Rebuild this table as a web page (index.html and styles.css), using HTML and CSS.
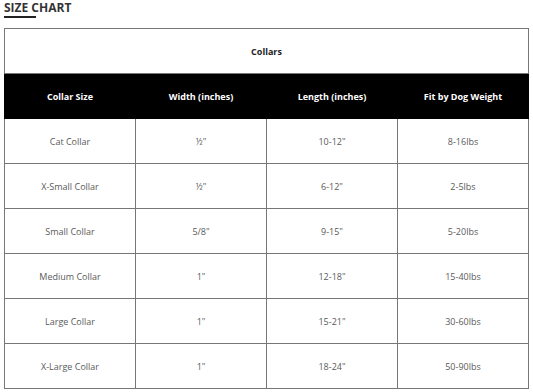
FILE: index.html
```html
<!DOCTYPE html>
<html>
<head>
<meta charset="utf-8">
<link rel="stylesheet" href="styles.css">
</head>
<body>
<div class="page">
  <h2 class="title">SIZE CHART</h2>
  <table class="chart">
    <tr class="caption-row"><td colspan="4">Collars</td></tr>
    <tr class="head-row">
      <th>Collar Size</th><th>Width (inches)</th><th>Length (inches)</th><th>Fit by Dog Weight</th>
    </tr>
    <tr><td>Cat Collar</td><td>½"</td><td>10-12"</td><td>8-16lbs</td></tr>
    <tr><td>X-Small Collar</td><td>½"</td><td>6-12"</td><td>2-5lbs</td></tr>
    <tr><td>Small Collar</td><td>5/8"</td><td>9-15"</td><td>5-20lbs</td></tr>
    <tr><td>Medium Collar</td><td>1"</td><td>12-18"</td><td>15-40lbs</td></tr>
    <tr><td>Large Collar</td><td>1"</td><td>15-21"</td><td>30-60lbs</td></tr>
    <tr><td>X-Large Collar</td><td>1"</td><td>18-24"</td><td>50-90lbs</td></tr>
  </table>
</div>
</body>
</html>
```
FILE: styles.css
```css
html, body {
  margin: 0;
  padding: 0;
  background: #fff;
}
body {
  font-family: "Open Sans", "Liberation Sans", sans-serif;
}
.page {
  padding: 1px 4px 0 4px;
}
.title {
  margin: 0;
  font-size: 12px;
  font-weight: 700;
  color: #333;
  line-height: 14px;
  padding: 0;
  display: block;
}
.title::after {
  content: "";
  display: block;
  width: 32px;
  height: 2px;
  background: #222;
  margin-top: 1px;
}
.chart {
  margin-top: 10px;
  width: 525px;
  border-collapse: collapse;
  table-layout: fixed;
  border: 1px solid #777;
}
.chart td, .chart th {
  border: 1px solid #777;
  height: 44px;
  padding: 0;
  text-align: center;
  vertical-align: middle;
  font-size: 9px;
  color: #5a5a5a;
  font-weight: 400;
}
.caption-row td {
  font-weight: 700;
  color: #222;
}
.head-row th {
  background: #000;
  color: #fff;
  font-weight: 700;
  border-color: #000;
}
```
